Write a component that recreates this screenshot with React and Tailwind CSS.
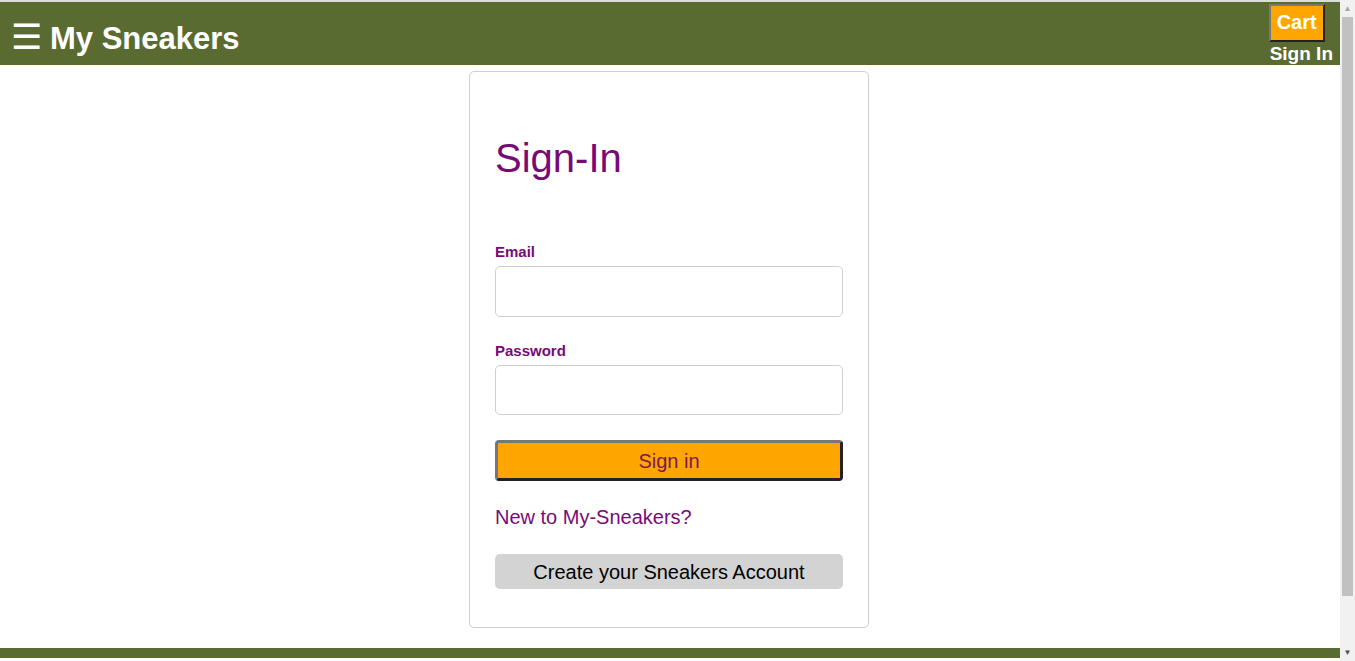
import React from 'react';

export default function App() {
  return (
    <div className="h-[661px] w-[1355px] flex overflow-hidden bg-white font-['Liberation_Sans',Arial,sans-serif]">
      <div className="flex-1 flex flex-col">
        <div className="h-[2px] bg-[#dcdcdc]" />
        <header className="h-[63px] bg-[#5a6b32] flex justify-between items-start text-white">
          <div className="flex items-center pl-[11px] pt-[17px] gap-[8px]">
            <span className="text-[35px] leading-none font-normal">☰</span>
            <span className="text-[31px] font-bold leading-none mt-[3px]">My Sneakers</span>
          </div>
          <div className="flex flex-col items-start pr-[7px] pt-[2px]">
            <button className="bg-[#ffa500] border-2 border-t-[#777] border-l-[#777] border-r-[#222] border-b-[#222] text-white font-bold text-[20px] leading-none px-[6px] pt-[6px] pb-[8px]">
              Cart
            </button>
            <span className="font-bold text-[19px] leading-none mt-[2px] ml-[1px]">Sign In</span>
          </div>
        </header>
        <main className="flex-1 flex justify-center pt-[6px] pr-[2px]">
          <div className="w-[400px] h-[557px] border border-[#cfcfcf] rounded-[5px] px-[25px] pt-[66px]">
            <h1 className="text-[40px] leading-none text-[#780a78]">Sign-In</h1>
            <form className="flex flex-col mt-[66px]">
              <label className="text-[15px] font-bold text-[#780a78] leading-none">Email</label>
              <input className="mt-[7px] h-[51px] border border-[#cfcfcf] rounded-[5px] px-2" />
              <label className="mt-[26px] text-[15px] font-bold text-[#780a78] leading-none">Password</label>
              <input type="password" className="mt-[7px] h-[50px] border border-[#cfcfcf] rounded-[5px] px-2" />
              <button type="button" className="mt-[25px] h-[41px] bg-[#ffa500] rounded-[4px] border-[3px] border-t-[#777] border-l-[#777] border-r-[#222] border-b-[#222] text-[20px] text-[#7a1a5a]">
                Sign in
              </button>
              <p className="mt-[26px] text-[20px] text-[#780a78] leading-none">New to My-Sneakers?</p>
              <button type="button" className="mt-[27px] h-[35px] bg-[#d3d3d3] rounded-[5px] text-[20px] text-black">
                Create your Sneakers Account
              </button>
            </form>
          </div>
        </main>
        <footer className="h-[10px] bg-[#5a6b32] mb-[3px]" />
      </div>
      <div className="w-[15px] bg-[#f1f1f1] flex flex-col items-center">
        <div className="h-[17px] flex items-center justify-center text-[#a3a3a3] text-[8px]">▲</div>
        <div className="w-[11px] h-[579px] bg-[#c1c1c1]" />
        <div className="flex-1" />
        <div className="h-[17px] flex items-center justify-center text-[#505050] text-[8px]">▼</div>
      </div>
    </div>
  );
}
